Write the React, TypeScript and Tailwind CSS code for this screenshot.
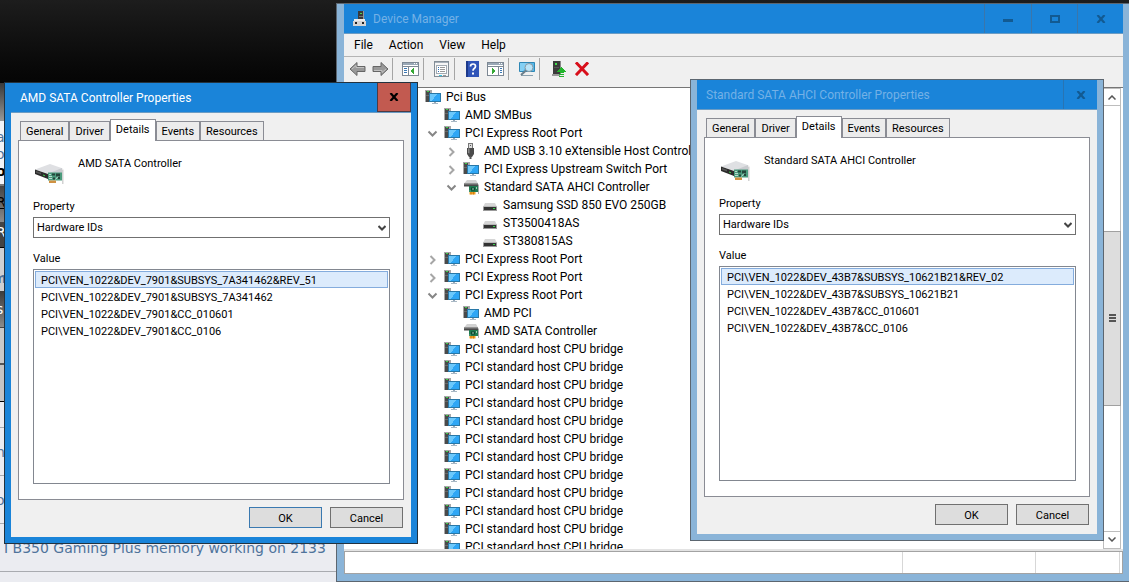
import React, { useState } from 'react';

type IconKind = 'computer' | 'usb' | 'controller' | 'drive';

interface TreeNode {
  level: number;
  icon: IconKind;
  label: string;
  state?: 'open' | 'closed';
}

const NODES: TreeNode[] = [
  { level: 0, icon: 'computer', label: 'Pci Bus' },
  { level: 1, icon: 'computer', label: 'AMD SMBus' },
  { level: 1, icon: 'computer', label: 'PCI Express Root Port', state: 'open' },
  { level: 2, icon: 'usb', label: 'AMD USB 3.10 eXtensible Host Controller', state: 'closed' },
  { level: 2, icon: 'computer', label: 'PCI Express Upstream Switch Port', state: 'closed' },
  { level: 2, icon: 'controller', label: 'Standard SATA AHCI Controller', state: 'open' },
  { level: 3, icon: 'drive', label: 'Samsung SSD 850 EVO 250GB' },
  { level: 3, icon: 'drive', label: 'ST3500418AS' },
  { level: 3, icon: 'drive', label: 'ST380815AS' },
  { level: 1, icon: 'computer', label: 'PCI Express Root Port', state: 'closed' },
  { level: 1, icon: 'computer', label: 'PCI Express Root Port', state: 'closed' },
  { level: 1, icon: 'computer', label: 'PCI Express Root Port', state: 'open' },
  { level: 2, icon: 'computer', label: 'AMD PCI' },
  { level: 2, icon: 'controller', label: 'AMD SATA Controller' },
  ...Array.from({ length: 12 }, (): TreeNode => ({ level: 1, icon: 'computer', label: 'PCI standard host CPU bridge' })),
];

const INDENT = ['pl-[60px]', 'pl-[79px]', 'pl-[98px]', 'pl-[117px]'];

const TABS = ['General', 'Driver', 'Details', 'Events', 'Resources'];

const ComputerIcon = () => (
  <svg width="16" height="16" viewBox="0 0 16 16" shapeRendering="crispEdges" className="shrink-0">
    <rect x="0" y="1" width="7" height="12" fill="#a8a8a8" />
    <rect x="1" y="2" width="4" height="11" fill="#4a4a4a" />
    <rect x="2" y="2" width="2" height="1" fill="#3fd048" />
    <rect x="1" y="6" width="3" height="1" fill="#6a6a6a" />
    <rect x="4" y="4" width="12" height="9" fill="#2878a8" />
    <rect x="5" y="5" width="10" height="7" fill="#2ea6f5" />
    <path d="M5 5h7l-5 7h-2z" fill="#6cc8fb" />
    <rect x="9" y="13" width="2" height="1" fill="#9ab" />
    <rect x="7" y="14" width="6" height="1" fill="#a9b8c4" />
  </svg>
);

const UsbIcon = () => (
  <svg width="16" height="16" viewBox="0 0 16 16" className="shrink-0">
    <rect x="5.5" y="0.5" width="4" height="5" fill="#ddd" stroke="#777" />
    <rect x="7" y="2" width="1" height="1" fill="#555" />
    <path d="M4 5h7v6l-2 3h-3l-2-3z" fill="#4b4b4b" />
    <path d="M5 5.5h1.5v5L5 10z" fill="#8a8a8a" />
    <rect x="6.5" y="13" width="2" height="3" fill="#555" />
  </svg>
);

const ControllerIcon = () => (
  <svg width="16" height="16" viewBox="0 0 16 16" className="shrink-0">
    <path d="M4 1h9l2 3.5H1z" fill="#d2d2d2" />
    <path d="M1 4.5h14v3H1z" fill="#4a4a4a" />
    <path d="M1 4.5h14v1H1z" fill="#8c8c8c" />
    <path d="M6 7h9v6H6z" fill="#1f7a50" />
    <path d="M8 8.5h4v3H8z" fill="#0d4630" />
    <path d="M9 9.5h2v1H9zM13 8h1v2h-1zM6.5 11.5h1v1h-1z" fill="#9fd0b4" />
    <path d="M6.5 13h6v2.5h-6z" fill="#f0a020" />
    <path d="M8 13v2.5M10.5 13v2.5" stroke="#c56a10" strokeWidth="0.7" />
    <path d="M15 5.5h1V15h-1z" fill="#aaa" />
  </svg>
);

const DriveIcon = () => (
  <svg width="16" height="16" viewBox="0 0 16 16" className="shrink-0">
    <path d="M3 6h10l2 4H1z" fill="#d6d6d6" />
    <path d="M1 9.5h14V14H1z" fill="#9a9a9a" />
    <path d="M2 10h12v3H2z" fill="#333" />
    <rect x="11" y="11" width="2" height="1" fill="#39d24a" />
  </svg>
);

const NodeIcon = ({ kind }: { kind: IconKind }) => {
  if (kind === 'usb') return <UsbIcon />;
  if (kind === 'controller') return <ControllerIcon />;
  if (kind === 'drive') return <DriveIcon />;
  return <ComputerIcon />;
};

const Chevron = ({ state }: { state?: 'open' | 'closed' }) => (
  <svg width="19" height="18" viewBox="0 0 19 18" fill="none" strokeWidth="2" className="shrink-0">
    {state === 'open' && <path d="M5.5 7.5l4 4 4-4" stroke="#868686" />}
    {state === 'closed' && <path d="M7.5 6l4 4-4 4" stroke="#a6a6a6" />}
  </svg>
);

const CardIcon = () => (
  <svg width="32" height="32" viewBox="0 0 32 32" className="shrink-0">
    <path d="M2 12.5L17 7l13 4.5-14 5.5z" fill="#dfe0e3" />
    <path d="M14 17l15-6v8l-15 3z" fill="#c9cbcf" />
    <path d="M2 12.5l13 4.5v5L2 17z" fill="#2b2b2b" />
    <path d="M3 14l5 1.8v1.7L3 15.7z" fill="#555" />
    <path d="M10 17.5l2 .7v1l-2-.7z" fill="#3fd048" />
    <path d="M15 15.5h14v8H15z" fill="#4a9b7c" />
    <path d="M19 16.5h3v2h-3zM23 16.5h4v3h-4zM20 20.5h2v2h-2zM25 20h2v2h-2z" fill="#24463a" />
    <path d="M16 17.5h2M16 19.5h3M16 21.5h3M22.5 22.5l2.5-3" stroke="#d5e9e1" strokeWidth="0.8" />
    <path d="M16 23.5h7V26h-7z" fill="#cf9243" />
    <path d="M29 12.5h1.5V27H29z" fill="#d2d2d2" />
  </svg>
);

const DeviceManagerIcon = () => (
  <svg width="16" height="18" viewBox="0 0 16 18" shapeRendering="crispEdges" className="shrink-0">
    <rect x="6" y="1" width="6" height="9" fill="#3a3a3a" />
    <rect x="11" y="1" width="1" height="9" fill="#999" />
    <rect x="8" y="3" width="2" height="1" fill="#4bd553" />
    <rect x="7" y="6" width="4" height="1" fill="#777" />
    <path d="M2 9h11v3H2z" fill="#ececec" />
    <rect x="1" y="11" width="13" height="5" fill="#d4d4d4" />
    <rect x="3" y="12" width="2" height="2" fill="#222" />
    <rect x="10" y="12" width="2" height="2" fill="#222" />
  </svg>
);

const ArrowIcon = ({ flip }: { flip?: boolean }) => (
  <svg width="17" height="16" viewBox="0 0 17 16" className={flip ? 'rotate-180' : ''}>
    <path d="M1 8l7-6.5v4h8v5H8v4z" fill="#999" stroke="#666" />
    <path d="M3 8l4-3.5v2h8" fill="none" stroke="#c2c2c2" />
  </svg>
);

const PaneIcon = ({ right }: { right?: boolean }) => (
  <svg width="17" height="14" viewBox="0 0 17 14" shapeRendering="crispEdges">
    <rect x="0.5" y="0.5" width="16" height="13" fill="#fff" stroke="#7d8894" />
    <rect x="1" y="1" width="15" height="2" fill="#9aa8b6" />
    <rect x="12" y="1" width="1" height="1" fill="#fff" />
    <rect x="14" y="1" width="1" height="1" fill="#fff" />
    <path d="M1 4.5h15" stroke="#7d8894" />
    <path d={right ? 'M11.5 5v8' : 'M6.5 5v8'} stroke="#7d8894" />
    <path d={right ? 'M13 6.5h2M13 8.5h2M13 10.5h2' : 'M2 6.5h3M2 8.5h3M2 10.5h3'} stroke="#3b78b5" />
    <path d={right ? 'M5 6l4 3-4 3z' : 'M12 6l-4 3 4 3z'} fill="#35a835" />
  </svg>
);

const PropertiesIcon = () => (
  <svg width="15" height="16" viewBox="0 0 15 16" shapeRendering="crispEdges">
    <rect x="0.5" y="0.5" width="14" height="15" fill="#f6f6f6" stroke="#838d96" />
    <rect x="1" y="1" width="13" height="1" fill="#a7b1bb" />
    <rect x="2.5" y="4.5" width="10" height="8" fill="#fff" stroke="#a3abb3" />
    <path d="M4 6.5h1M4 8.5h1M4 10.5h1" stroke="#2b6cb0" />
    <path d="M6 6.5h5M6 8.5h5M6 10.5h5" stroke="#999" />
    <path d="M5 14.5h3" stroke="#35c3e0" />
    <path d="M9 14.5h3" stroke="#999" />
  </svg>
);

const HelpIcon = () => (
  <svg width="13" height="16" viewBox="0 0 13 16">
    <rect width="13" height="16" fill="#3055b8" />
    <rect width="2" height="16" fill="#1d3a8c" />
    <path d="M4.5 5.5q0-2.5 2.5-2.5t2.5 2.3q0 1.4-1.3 2.2-1.2.8-1.2 2.3" fill="none" stroke="#fff" strokeWidth="1.7" />
    <rect x="6" y="11.5" width="2" height="2" fill="#fff" />
  </svg>
);

const ScanIcon = () => (
  <svg width="17" height="16" viewBox="0 0 17 16">
    <path d="M1.5 1.5h15v9h-15z" fill="#54b8ea" stroke="#2f87b5" />
    <path d="M2 2h9L5 10H2z" fill="#84d0f4" />
    <path d="M3 14.5h12" stroke="#8aa0ae" />
    <circle cx="11" cy="6.5" r="4" fill="#b9e4f8" stroke="#8a98a2" />
    <path d="M8 9.5L3 14" stroke="#6b7f8c" strokeWidth="2" />
  </svg>
);

const UpdateIcon = () => (
  <svg width="14" height="16" viewBox="0 0 14 16" shapeRendering="crispEdges">
    <rect x="1" y="0" width="8" height="13" fill="#3b3b3b" />
    <rect x="8" y="0" width="1" height="13" fill="#888" />
    <rect x="3" y="2" width="2" height="2" fill="#3fdc4b" />
    <path d="M2 6.5h5" stroke="#555" />
    <rect x="0" y="13" width="8" height="2" fill="#999" />
    <path d="M9.5 6l4.5 5h-2.5v1h-4v-1H5z" fill="#22b52c" />
    <path d="M7 13.5h5M7 15.5h5" stroke="#22b52c" />
  </svg>
);

const RemoveIcon = () => (
  <svg width="14" height="14" viewBox="0 0 14 14">
    <path d="M2 1.5L12 12M12 1.5L2 12" stroke="#d80f1b" strokeWidth="3" strokeLinecap="square" />
  </svg>
);

const CloseGlyph = () => (
  <svg width="10" height="8" viewBox="0 0 10 8" stroke="currentColor" strokeWidth="2.2">
    <path d="M1.5 0L8.5 8M8.5 0L1.5 8" />
  </svg>
);

const Separator = () => <div className="h-[22px] w-px bg-[#a5a5a5]" />;

const toolButton = 'flex h-6 w-[23px] items-center justify-center';
const winButton = 'flex items-center justify-center border-l border-[#3a76ab] text-[#125a92]';

interface PropertiesDialogProps {
  name: string;
  ids: string[];
  active?: boolean;
  className: string;
}

const PropertiesDialog: React.FC<PropertiesDialogProps> = ({ name, ids, active, className }) => {
  const [tab, setTab] = useState('Details');
  const [selected, setSelected] = useState(0);
  const fieldId = name.replace(/\s/g, '-').toLowerCase();

  return (
    <section
      className={`absolute w-[414px] border px-1.5 pb-1.5 text-[11px] leading-[13px] text-black ${active ? 'border-[#22323f] bg-[#1a84d9]' : 'border-[#5c6670] bg-[#8ab4d8]'} ${className}`}
    >
      <header className="flex h-[30px] border-b border-[#6b9cc4] bg-[#1a84d9]">
        <h2 className={`flex-1 pl-[9px] text-xs leading-[31px] ${active ? 'text-white' : 'text-[#74b1e6]'}`}>{name} Properties</h2>
        <button
          aria-label="Close"
          className={`flex w-[34px] items-center justify-center ${active ? 'border border-t-0 border-[#4d3a44] bg-[#c25a50] text-black' : 'border-l border-[#2874b3] text-[#125a92]'}`}
        >
          <CloseGlyph />
        </button>
      </header>

      <div className="bg-[#f0f0f0] px-[7px] pt-1.5 pb-[9px]">
        <div role="tablist" className="relative z-10 flex h-[21px] items-end pl-0.5">
          {TABS.map((t) => (
            <button
              key={t}
              role="tab"
              aria-selected={t === tab}
              onClick={() => setTab(t)}
              className={
                t === tab
                  ? '-mb-px h-[22px] border border-b-0 border-[#8a8c94] bg-white px-[5px] pb-0.5'
                  : 'h-[19px] border border-b-0 border-[#8a8c94] bg-[#ececec] px-[5px] pt-px'
              }
            >
              {t}
            </button>
          ))}
        </div>

        <div className="border border-[#8a8c94] bg-white pr-[13px] pb-[15px] pl-3.5">
          <div className="flex gap-[13px] pt-4">
            <CardIcon />
            <p>{name}</p>
          </div>
          <label htmlFor={fieldId} className="mt-[11px] block">Property</label>
          <div className="relative mt-1">
            <select
              id={fieldId}
              className="block h-[21px] w-full appearance-none border border-[#707070] bg-white pl-[3px]"
            >
              <option>Hardware IDs</option>
            </select>
            <svg width="8" height="6" viewBox="0 0 8 6" className="pointer-events-none absolute top-2 right-1">
              <path d="M0.5 1L4 4.5 7.5 1" fill="none" stroke="#444" strokeWidth="2" />
            </svg>
          </div>
          <p id={`${fieldId}-value`} className="mt-3.5">Value</p>
          <ul
            role="listbox"
            aria-labelledby={`${fieldId}-value`}
            className="mt-1 h-[215px] border border-[#828790] p-px"
          >
            {ids.map((id, i) => (
              <li
                key={id}
                role="option"
                aria-selected={i === selected}
                onClick={() => setSelected(i)}
                className={`flex h-[17px] items-center border px-[5px] pt-px ${i === selected ? 'border-[#84acdd] bg-[#dcebfc]' : 'border-transparent'}`}
              >
                {id}
              </li>
            ))}
          </ul>
        </div>

        <div className="flex justify-end gap-2 pt-[7px] pr-px">
          <button className={`h-[21px] w-[73px] border bg-[#dddddd] pt-px ${active ? 'border-[#3a79b0]' : 'border-[#707070]'}`}>OK</button>
          <button className="h-[21px] w-[73px] border border-[#707070] bg-[#dddddd] pt-px">Cancel</button>
        </div>
      </div>
    </section>
  );
};

const DeviceManager = () => (
  <section className="absolute top-[3px] right-0 bottom-0 left-[336px] flex flex-col border-y border-l border-[#5c6670] bg-[#8ab4d8] pr-1.5 pb-[7px] pl-[7px] text-xs text-black">
    <header className="flex h-[30px] shrink-0 border-b border-[#6b9cc4] bg-[#1a84d9] pl-2">
      <div className="flex flex-1 items-center gap-[5px]">
        <DeviceManagerIcon />
        <h1 className="text-[#74b1e6]">Device Manager</h1>
      </div>
      <button aria-label="Minimize" className={`w-[47px] ${winButton}`}>
        <span className="mt-1 h-[3px] w-2.5 bg-[#125a92]" />
      </button>
      <button aria-label="Maximize" className={`w-[46px] ${winButton}`}>
        <span className="h-2 w-2.5 border-2 border-[#125a92]" />
      </button>
      <button aria-label="Close" className={`w-[46px] ${winButton}`}>
        <CloseGlyph />
      </button>
    </header>

    <nav className="flex h-[23px] shrink-0 items-center gap-4 border-b border-[#b4b4b4] bg-[#f0f0f0] pl-2.5">
      <button>File</button>
      <button>Action</button>
      <button>View</button>
      <button>Help</button>
    </nav>

    <div className="flex h-[31px] shrink-0 items-center border-b border-[#767676] bg-[#f0f0f0] pb-1.5 pl-0.5">
      <button aria-label="Back" className={toolButton}><ArrowIcon /></button>
      <button aria-label="Forward" className={toolButton}><ArrowIcon flip /></button>
      <Separator />
      <div className="flex w-[30px] justify-center pl-1"><button aria-label="Show console tree" className={toolButton}><PaneIcon /></button></div>
      <Separator />
      <div className="flex w-[30px] justify-center pl-1"><button aria-label="Properties" className={toolButton}><PropertiesIcon /></button></div>
      <Separator />
      <div className="flex w-[53px] pl-1.5"><button aria-label="Help" className={toolButton}><HelpIcon /></button><button aria-label="Show action pane" className={toolButton}><PaneIcon right /></button></div>
      <Separator />
      <div className="flex w-[30px] justify-center pl-1"><button aria-label="Scan for hardware changes" className={toolButton}><ScanIcon /></button></div>
      <Separator />
      <div className="flex pl-[7px]">
        <button aria-label="Update driver" className={toolButton}><UpdateIcon /></button>
        <button aria-label="Uninstall device" className={toolButton}><RemoveIcon /></button>
      </div>
    </div>

    <div className="flex min-h-0 flex-1 bg-white pr-0.5">
      <ul className="min-w-0 flex-1 overflow-hidden">
        {NODES.map((n, i) => (
          <li key={i} className={`flex h-[18px] items-center ${INDENT[n.level]}`}>
            <Chevron state={n.state} />
            <span className="flex items-center gap-[5px] pl-0.5 whitespace-nowrap">
              <NodeIcon kind={n.icon} />
              {n.label}
            </span>
          </li>
        ))}
      </ul>
      <div className="flex w-[18px] shrink-0 flex-col border border-[#bdbdbd] bg-white">
        <button aria-label="Scroll up" className="flex h-[17px] items-center justify-center border-b border-[#bdbdbd]">
          <svg width="8" height="5" viewBox="0 0 8 5"><path d="M0.5 4.5L4 1l3.5 3.5" fill="none" stroke="#555" strokeWidth="1.5" /></svg>
        </button>
        <div className="flex-[126]" />
        <div className="-mx-px flex flex-[175] flex-col items-center justify-center gap-px border border-[#a0a0a0] bg-[#dddddd]">
          <span className="h-0.5 w-[7px] bg-[#555]" />
          <span className="h-0.5 w-[7px] bg-[#555]" />
          <span className="h-0.5 w-[7px] bg-[#555]" />
        </div>
        <div className="flex-[126]" />
        <button aria-label="Scroll down" className="flex h-[17px] items-center justify-center border-t border-[#bdbdbd]">
          <svg width="8" height="5" viewBox="0 0 8 5"><path d="M0.5 0.5L4 4l3.5-3.5" fill="none" stroke="#555" strokeWidth="1.5" /></svg>
        </button>
      </div>
    </div>

    <footer className="flex h-[25px] shrink-0 border-t-2 border-[#e3e3e3] bg-white">
      <div className="flex flex-1 border border-[#a3a3a3] pr-0.5">
        <div className="flex-1" />
        <div className="w-[133px] border-l border-[#d7d7d7]" />
        <div className="w-[85px] border-x border-[#d7d7d7]" />
      </div>
    </footer>
  </section>
);

// Forum page behind the windows; only its edge and one thread title show
const ForumPage = () => (
  <main className="flex h-screen flex-col overflow-hidden bg-[#ebecf1] text-sm text-[#4f739b]">
    <div className="h-[83px] shrink-0 bg-linear-to-b from-[#1d1d1d] to-[#050505]" />
    <div className="h-[38px] shrink-0 bg-linear-to-b from-[#3a3a3a] to-[#999999]" />
    <div className="flex h-[65px] shrink-0 flex-col border-b-2 border-[#777] bg-[#f3f4f7] pt-2 -indent-1 leading-[17px]">
      <span>a</span>
      <span>o</span>
      <b className="text-black">or</b>
    </div>
    <div className="h-[36px] shrink-0 bg-linear-to-b from-[#454545] to-[#8b8b8b] pt-1.5 -indent-1 text-black underline">Re</div>
    <div className="h-[26px] shrink-0 border-b border-black bg-[#444] -indent-1 text-white">R</div>
    <div className="h-[43px] shrink-0 bg-[#cfd0d2] pt-5 -indent-2 font-bold">m</div>
    <div className="h-[37px] shrink-0 border-b border-[#444] bg-linear-to-b from-[#3c3c3c] to-[#8b8b8b] pt-2 -indent-1 text-white">s</div>
    <div className="h-[37px] shrink-0 border-b-2 border-[#555] bg-[#c8c8c8]" />
    <div className="h-[37px] shrink-0 border-b border-black bg-[#c4c4c4]" />
    <div className="h-[26px] shrink-0 border-b border-[#a9abb0]" />
    <div className="h-12 shrink-0 border-b border-[#a9abb0] pt-3.5 -indent-1">n</div>
    <div className="h-12 shrink-0 border-b border-[#a9abb0] pt-3.5 -indent-1">oc</div>
    <div className="flex h-12 shrink-0 items-center border-b border-[#a9abb0] pl-1">
      <a href="#thread" className="whitespace-nowrap">I B350 Gaming Plus memory working on 2133</a>
    </div>
  </main>
);

export default function App() {
  return (
    <div className="relative h-screen overflow-hidden font-[Roboto,sans-serif]">
      <div className="font-['DejaVu_Sans',sans-serif]">
        <ForumPage />
      </div>
      <DeviceManager />
      <PropertiesDialog
        className="top-[79px] left-[690px]"
        name="Standard SATA AHCI Controller"
        ids={[
          'PCI\\VEN_1022&DEV_43B7&SUBSYS_10621B21&REV_02',
          'PCI\\VEN_1022&DEV_43B7&SUBSYS_10621B21',
          'PCI\\VEN_1022&DEV_43B7&CC_010601',
          'PCI\\VEN_1022&DEV_43B7&CC_0106',
        ]}
      />
      <PropertiesDialog
        active
        className="top-[82px] left-1"
        name="AMD SATA Controller"
        ids={[
          'PCI\\VEN_1022&DEV_7901&SUBSYS_7A341462&REV_51',
          'PCI\\VEN_1022&DEV_7901&SUBSYS_7A341462',
          'PCI\\VEN_1022&DEV_7901&CC_010601',
          'PCI\\VEN_1022&DEV_7901&CC_0106',
        ]}
      />
    </div>
  );
}
